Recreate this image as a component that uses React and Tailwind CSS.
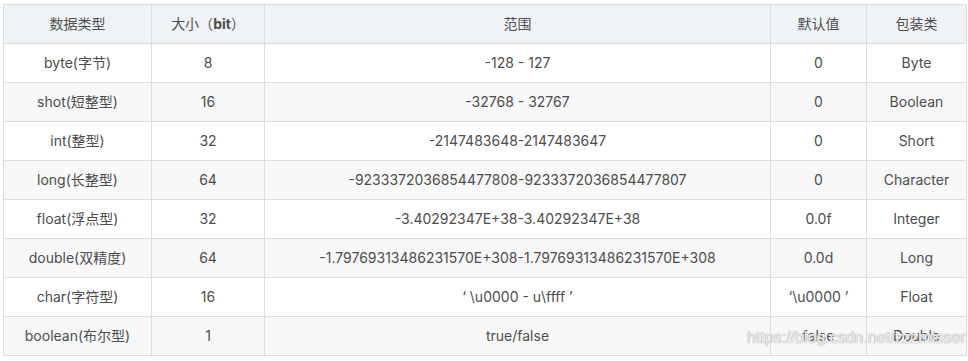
import React from 'react';

const rows = [
  ['byte(字节)', '8', '-128 - 127', '0', 'Byte'],
  ['shot(短整型)', '16', '-32768 - 32767', '0', 'Boolean'],
  ['int(整型)', '32', '-2147483648-2147483647', '0', 'Short'],
  ['long(长整型)', '64', '-9233372036854477808-9233372036854477807', '0', 'Character'],
  ['float(浮点型)', '32', '-3.40292347E+38-3.40292347E+38', '0.0f', 'Integer'],
  ['double(双精度)', '64', '-1.79769313486231570E+308-1.79769313486231570E+308', '0.0d', 'Long'],
  ['char(字符型)', '16', '‘ \\u0000 - u\\ffff ’', '‘\\u0000 ’', 'Float'],
  ['boolean(布尔型)', '1', 'true/false', 'false', 'Double'],
];

const App = () => {
  return (
    <div
      className="relative w-[968px] h-[361px] bg-white pl-[3px] pt-[4px] text-[14px] text-[#4d4d4d]"
      style={{ fontFamily: 'Inter, "Noto Sans CJK SC", sans-serif' }}
    >
      <table className="table-fixed border-collapse w-[963px]">
        <colgroup>
          <col className="w-[148px]" />
          <col className="w-[113px]" />
          <col className="w-[506px]" />
          <col className="w-[96px]" />
          <col className="w-[100px]" />
        </colgroup>
        <thead>
          <tr className="h-[39px] bg-[#eff3f5] text-[#4f4f4f]">
            <th className="border border-[#dddddd] font-normal text-center pb-[2px]">数据类型</th>
            <th className="border border-[#dddddd] font-normal text-center pb-[2px]">
              大小（<span className="font-bold">bit</span>）
            </th>
            <th className="border border-[#dddddd] font-normal text-center pb-[2px]">范围</th>
            <th className="border border-[#dddddd] font-normal text-center pb-[2px]">默认值</th>
            <th className="border border-[#dddddd] font-normal text-center pb-[2px]">包装类</th>
          </tr>
        </thead>
        <tbody>
          {rows.map((r, i) => (
            <tr key={i} className={`h-[39px] ${i % 2 === 1 ? 'bg-[#f8f8f8]' : 'bg-white'}`}>
              {r.map((c, j) => (
                <td key={j} className="border border-[#dddddd] text-center whitespace-nowrap pb-[2px]">
                  {c}
                </td>
              ))}
            </tr>
          ))}
        </tbody>
      </table>

      {/* CSDN watermark */}
      <div
        className="absolute left-[747px] top-[326px] text-[16px] text-white/80 whitespace-nowrap"
        style={{ fontFamily: '"Liberation Sans", sans-serif', textShadow: '0 0 1px #a0a0a0, 0 0 1px #a0a0a0' }}
      >
        https://blog.csdn.net/zzzmisser
      </div>
    </div>
  );
};

export default App;
